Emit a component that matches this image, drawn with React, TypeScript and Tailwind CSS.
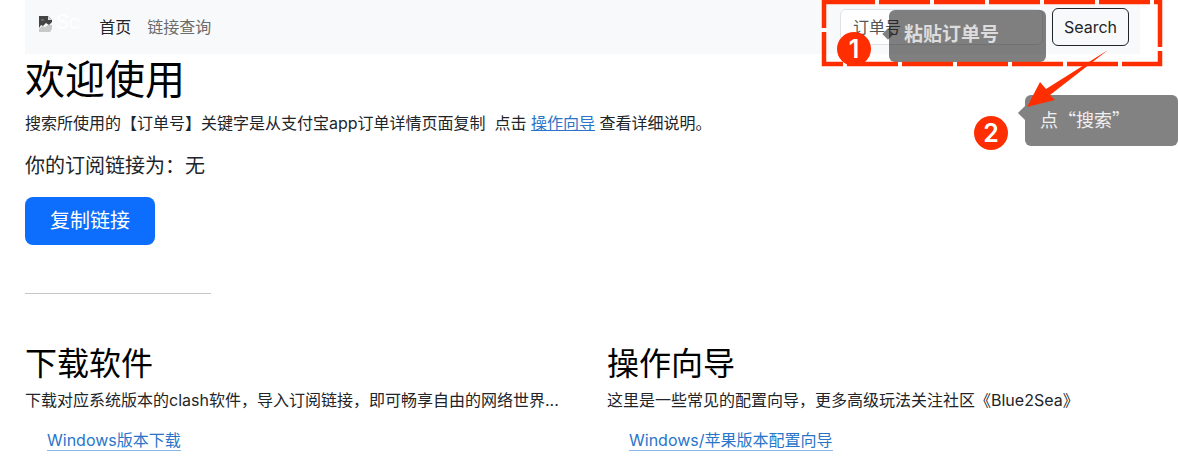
const font = "font-['Inter','Noto_Sans_CJK_SC',sans-serif]";

function BrokenImage() {
  return (
    <svg width="16" height="16" viewBox="0 0 16 16" className="shrink-0">
      <path d="M1 0h9l4 4v2l-3 3-3-2-3 3-2-1-2 3z" fill="#444" />
      <path d="M10 0l4 4h-4z" fill="#ddd" />
      <path d="M1 13l3-3 3 1 3-2 4 0v4l-2 3H1z" fill="#c8c8c8" />
      <path d="M3 3h3v2H3z" fill="#666" />
    </svg>
  );
}

function Annotations() {
  return (
    <>
      <div className="absolute left-[884px] top-[30px] h-[8px] w-[8px] rotate-45 bg-black/50" />
      <div className="absolute left-[889px] top-[10px] h-[52px] w-[157px] rounded-md bg-black/50 pl-[15px] pt-[11px] text-[19px] font-semibold leading-[28px] text-[#dcdcdc]">
        粘贴订单号
      </div>
      <div className="absolute left-[1020px] top-[108px] h-[10px] w-[10px] rotate-45 bg-[#828282]" />
      <div className="absolute left-[1025px] top-[95px] h-[51px] w-[153px] rounded-md bg-[#828282] pl-[15px] pt-[10px] font-['Noto_Sans_CJK_SC',sans-serif] text-[18px] leading-[28px] text-[#f0f0f0]">
        {"点\u201C搜索\u201D"}
      </div>
      <svg width="1178" height="458" viewBox="0 0 1178 458" className="pointer-events-none absolute left-0 top-0">
        <rect x="824" y="2" width="336" height="62" fill="none" stroke="#ff2e00" strokeWidth="4.5" strokeDasharray="51 4" />
        <path d="M1108 50 L1046 89 L1040 82 L1027 107 L1055 100 L1050 95 Z" fill="#ff2e00" />
      </svg>
      <div className="absolute left-[837px] top-[32px] flex h-[34px] w-[34px] items-center justify-center rounded-full bg-[#ff2e00] text-[25px] font-semibold leading-none text-white">
        1
      </div>
      <div className="absolute left-[974px] top-[116px] flex h-[34px] w-[34px] items-center justify-center rounded-full bg-[#ff2e00] text-[25px] font-semibold leading-none text-white">
        2
      </div>
    </>
  );
}

function Column({ title, text, link }: { title: string; text: string; link: string }) {
  return (
    <div className="w-[582px] shrink-0">
      <h2 className="text-[32px] leading-[38px] text-black">{title}</h2>
      <p className="mt-[5px] text-[16px] leading-[24px] text-[#212529]">{text}</p>
      <div className="mt-[16px] pl-[22px]">
        <a className="border-b border-[#8db9e8] text-[16px] leading-[24px] text-[#2a75c9]">{link}</a>
      </div>
    </div>
  );
}

export default function App() {
  return (
    <div className={`${font} relative h-[458px] w-[1178px] overflow-hidden bg-white px-[25px]`}>
      <nav className="flex h-[54px] w-[1115px] items-center bg-[#f8f9fa]">
        <div className="mb-[10px] ml-[13px] flex items-end">
          <BrokenImage />
          <span className="ml-[2px] text-[20px] leading-[20px] text-white">Sc</span>
        </div>
        <a className="ml-[19px] text-[16px] text-[#212529]">首页</a>
        <a className="ml-[16px] text-[16px] text-[#6c6c6c]">链接查询</a>
        <div className="ml-auto mr-[11px] flex items-center gap-[9px]">
          <div className="flex h-[36px] w-[203px] items-center rounded-md border border-[#dee2e6] bg-white px-3 text-[16px] text-[#555]">
            订单号
          </div>
          <button className="h-[38px] w-[77px] rounded-md border border-[#212529] text-[16px] text-[#212529]">Search</button>
        </div>
      </nav>

      <h1 className="mt-[2px] text-[40px] leading-[48px] text-black">欢迎使用</h1>
      <p className="mt-[7px] text-[16px] leading-[24px] text-[#212529]">
        搜索所使用的【订单号】关键字是从支付宝app订单详情页面复制&nbsp;&nbsp;点击 <a className="text-[#2a75c9] underline">操作向导</a> 查看详细说明。
      </p>
      <p className="mt-[16px] text-[20px] leading-[30px] text-[#212529]">{"你的订阅链接为\uFF1A无"}</p>
      <button className="mt-[16px] block h-[48px] w-[130px] rounded-lg bg-[#0d6efd] text-[20px] text-white">复制链接</button>
      <hr className="mt-[48px] w-[186px] border-t border-[#c6c7c8]" />
      <div className="mt-[51px] flex">
        <Column title="下载软件" text={"下载对应系统版本的clash软件\uFF0C导入订阅链接\uFF0C即可畅享自由的网络世界..."} link="Windows版本下载" />
        <Column title="操作向导" text={"这里是一些常见的配置向导\uFF0C更多高级玩法关注社区《Blue2Sea》"} link="Windows/苹果版本配置向导" />
      </div>
      <Annotations />
    </div>
  );
}
